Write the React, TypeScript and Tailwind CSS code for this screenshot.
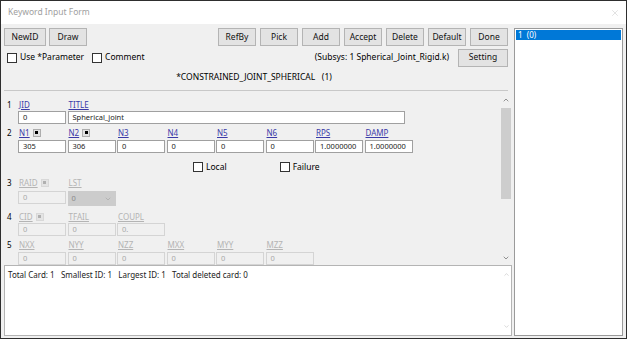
import { X, ChevronDown, ChevronUp } from "lucide-react"

const font = { fontFamily: '"Noto Sans", "Open Sans", sans-serif' }

function Btn({ label, w = "w-[38px]" }: { label: string; w?: string }) {
  return (
    <button className={`${w} h-[18px] bg-[#e3e3e3] border border-[#b4b4b4] text-[8.5px] text-[#111] leading-none`}>
      {label}
    </button>
  )
}

function Check({ label }: { label: string }) {
  return (
    <label className="flex items-center gap-[3px] text-[8.5px] text-black">
      <span className="w-[10px] h-[10px] border border-[#333] bg-white" />
      {label}
    </label>
  )
}

function Pin({ off }: { off?: boolean }) {
  return (
    <span className={`ml-[3px] inline-flex items-center justify-center w-[8px] h-[8px] border ${off ? "border-[#d8d8d8] bg-[#e4e4e4]" : "border-[#adadad] bg-[#e1e1e1]"}`}>
      <span className={`w-[3px] h-[3px] ${off ? "bg-[#b0b0b0]" : "bg-black"}`} />
    </span>
  )
}

type Field = { name: string; value: string; pin?: boolean }

function Label({ f, off }: { f: Field; off?: boolean }) {
  return (
    <div className="w-[48px] flex items-center pl-[1px]">
      <span className={`underline text-[8px] ${off ? "text-[#b4b4b4]" : "text-[#3a3aa8]"}`}>{f.name}</span>
      {f.pin && <Pin off={off} />}
    </div>
  )
}

function Input({ value, off, w = "w-[48px]" }: { value: string; off?: boolean; w?: string }) {
  return (
    <div
      className={`${w} h-[13px] border flex items-center pl-[4px] text-[7.5px] ${
        off ? "border-[#d4d4d4] bg-[#f0f0f0] text-[#a8a8a8]" : "border-[#a0a0a0] bg-white text-[#222]"
      }`}
    >
      {value}
    </div>
  )
}

function Card({ n, fields, off, mt, gap }: { n: string; fields: Field[]; off?: boolean; mt: string; gap: string }) {
  return (
    <div className={mt}>
      <div className="flex items-center h-[11px]">
        <span className="w-[14px] pl-[3px] text-[8px] text-black">{n}</span>
        <div className="flex gap-[1.5px]">
          {fields.map((f) => (
            <Label key={f.name} f={f} off={off} />
          ))}
        </div>
      </div>
      <div className={`flex gap-[1.5px] pl-[14px] ${gap}`}>
        {fields.map((f) => (
          <Input key={f.name} value={f.value} off={off} />
        ))}
      </div>
    </div>
  )
}

export default function App() {
  const row2: Field[] = [
    { name: "N1", value: "305", pin: true },
    { name: "N2", value: "306", pin: true },
    { name: "N3", value: "0" },
    { name: "N4", value: "0" },
    { name: "N5", value: "0" },
    { name: "N6", value: "0" },
    { name: "RPS", value: "1.0000000" },
    { name: "DAMP", value: "1.0000000" },
  ]
  const row4: Field[] = [
    { name: "CID", value: "0", pin: true },
    { name: "TFAIL", value: "0" },
    { name: "COUPL", value: "0." },
  ]
  const row5: Field[] = ["NXX", "NYY", "NZZ", "MXX", "MYY", "MZZ"].map((name) => ({ name, value: "0" }))

  return (
    <div style={font} className="w-[627px] h-[339px] border border-[#2e2e2e] bg-[#f0f0f0] flex flex-col overflow-hidden">
      <div className="h-[23px] bg-white flex items-center justify-between pl-[7px] pr-[6px]">
        <span className="text-[8.5px] text-[#a0a0a0]">Keyword Input Form</span>
        <X className="w-[10px] h-[10px] text-[#d0d0d0]" strokeWidth={1.5} />
      </div>

      <div className="flex-1 flex px-[3px] pb-[2px] pt-[4px] gap-[2px]">
        <div className="w-[508px] flex flex-col">
          <div className="flex items-center justify-between pr-[4px]">
            <div className="flex gap-[3px]">
              <Btn label="NewID" w="w-[42px]" />
              <Btn label="Draw" />
            </div>
            <div className="flex gap-[4px]">
              {["RefBy", "Pick", "Add", "Accept", "Delete", "Default", "Done"].map((b) => (
                <Btn key={b} label={b} />
              ))}
            </div>
          </div>

          <div className="mt-[2px] h-[19px] flex items-center justify-between pl-[3px] pr-[4px]">
            <div className="flex items-center gap-[8px]">
              <Check label="Use *Parameter" />
              <Check label="Comment" />
            </div>
            <div className="flex items-center gap-[9px]">
              <span className="text-[8.5px] text-black">(Subsys: 1 Spherical_Joint_Rigid.k)</span>
              <Btn label="Setting" w="w-[50px]" />
            </div>
          </div>

          <div className="h-[20px] flex items-center justify-center text-[8.5px] text-black pr-[8px]">
            *CONSTRAINED_JOINT_SPHERICAL&nbsp;&nbsp;&nbsp;(1)
          </div>

          <div className="mt-[3px] border-t border-[#c8c8c8] mr-[4px]" />

          <div className="h-[174px] flex overflow-hidden">
            <div className="flex-1 flex flex-col">
              <div className="mt-[8px]">
                <div className="flex items-center h-[11px]">
                  <span className="w-[14px] pl-[3px] text-[8px] text-black">1</span>
                  <Label f={{ name: "JID", value: "0" }} />
                  <div className="ml-[1.5px]">
                    <Label f={{ name: "TITLE", value: "" }} />
                  </div>
                </div>
                <div className="flex gap-[1.5px] pl-[14px] mt-[1px]">
                  <Input value="0" />
                  <Input value="Spherical_joint" w="w-[337px]" />
                </div>
              </div>

              <Card n="2" fields={row2} mt="mt-[3px]" gap="mt-[2px]" />

              <div className="mt-[9px] h-[10px] flex items-center text-[8px]">
                <div className="ml-[189px]">
                  <Check label="Local" />
                </div>
                <div className="ml-[53px]">
                  <Check label="Failure" />
                </div>
              </div>

              <div className="mt-[5px]">
                <div className="flex items-center h-[11px]">
                  <span className="w-[14px] pl-[3px] text-[8px] text-black">3</span>
                  <Label f={{ name: "RAID", value: "0", pin: true }} off />
                  <div className="ml-[1.5px]">
                    <Label f={{ name: "LST", value: "0" }} off />
                  </div>
                </div>
                <div className="flex gap-[1.5px] pl-[14px] mt-[3px]">
                  <Input value="0" off />
                  <div className="w-[48px] h-[15px] bg-[#cccccc] flex items-center justify-between pl-[4px] pr-[4px] text-[7.5px] text-[#8a8a8a]">
                    0
                    <ChevronDown className="w-[8px] h-[8px] text-[#9a9a9a]" strokeWidth={1.5} />
                  </div>
                </div>
              </div>

              <Card n="4" fields={row4} off mt="mt-[5px]" gap="mt-[1px]" />
              <Card n="5" fields={row5} off mt="mt-[3px]" gap="mt-[2px]" />
            </div>

            <div className="w-[11px] mr-[1px] flex flex-col items-center">
              <ChevronUp className="mt-[5px] w-[8px] h-[8px] text-[#606060]" strokeWidth={2} />
              <div className="mt-[4px] w-[10px] h-[91px] bg-[#cdcdcd]" />
              <div className="flex-1" />
              <ChevronDown className="mb-[3px] w-[8px] h-[8px] text-[#606060]" strokeWidth={2} />
            </div>
          </div>

          <div className="flex-1 bg-white border border-[#b4b4b4] flex">
            <div className="flex-1 pl-[3px] pt-[3px] text-[8px] text-[#222] whitespace-pre">
              {"Total Card: 1   Smallest ID: 1   Largest ID: 1   Total deleted card: 0"}
            </div>
            <div className="w-[10px] flex flex-col items-center justify-between py-[5px]">
              <ChevronUp className="w-[7px] h-[7px] text-[#c0c0c0]" strokeWidth={2} />
              <ChevronDown className="w-[7px] h-[7px] text-[#c0c0c0]" strokeWidth={2} />
            </div>
          </div>
        </div>

        <div className="flex-1 bg-white border border-[#9a9a9a] p-[1px]">
          <div className="h-[10px] bg-[#0078d7] text-white text-[8px] leading-[10px] pl-[2px] whitespace-pre">
            {"1  (0)"}
          </div>
        </div>
      </div>
    </div>
  )
}
